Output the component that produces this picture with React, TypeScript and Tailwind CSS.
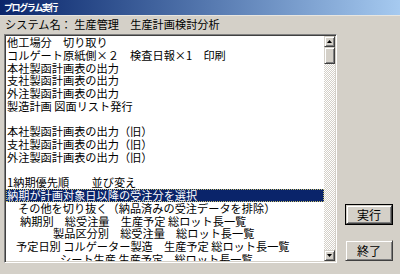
import React from "react";

const items: { text: string; indent?: number; selected?: boolean }[] = [
  { text: "他工場分　切り取り" },
  { text: "コルゲート原紙側×２　検査日報×1　印刷" },
  { text: "本社製函計画表の出力" },
  { text: "支社製函計画表の出力" },
  { text: "外注製函計画表の出力" },
  { text: "製造計画 図面リスト発行" },
  { text: "" },
  { text: "本社製函計画表の出力（旧）" },
  { text: "支社製函計画表の出力（旧）" },
  { text: "外注製函計画表の出力（旧）" },
  { text: "" },
  { text: "1納期優先順　　並び変え" },
  { text: "納期が計画対象日以降の受注分を選択", selected: true },
  { text: "その他を切り抜く（納品済みの受注データを排除）", indent: 11 },
  { text: "納期別　総受注量　生産予定 総ロット長一覧", indent: 13 },
  { text: "製品区分別　総受注量　総ロット長一覧", indent: 46 },
  { text: "予定日別 コルゲーター製造　生産予定 総ロット長一覧", indent: 9 },
  { text: "シート生産 生産予定　総ロット長一覧", indent: 53 },
];

const raised =
  "border border-t-[#d4d0c8] border-l-[#d4d0c8] border-r-[#404040] border-b-[#404040] shadow-[inset_1px_1px_0_#ffffff,inset_-1px_-1px_0_#808080] bg-[#d4d0c8]";

function Arrow({ down }: { down?: boolean }) {
  return (
    <svg width="5" height="3" viewBox="0 0 5 3">
      <path d={down ? "M0 0H5L2.5 3Z" : "M2.5 0L5 3H0Z"} fill="#000" />
    </svg>
  );
}

export default function App() {
  return (
    <div className="w-[400px] h-[274px] bg-[#d4d0c8] overflow-hidden font-['Noto_Sans_CJK_JP',sans-serif] text-black">
      {/* Title bar */}
      <div className="h-[15px] bg-gradient-to-r from-[#0a246a] to-[#a6caf0] flex items-center pl-[4px]">
        <span className="text-white font-bold text-[9px] tracking-[-1.4px] leading-none">プログラム実行</span>
      </div>
      <div className="h-px bg-[#e8e6e0]" />

      {/* System name */}
      <div className="h-[18px] flex items-center pl-[5px] text-[11.2px] leading-none whitespace-pre">
        システム名： 生産管理　生産計画検討分析
      </div>

      <div className="flex pl-[4px]">
        {/* List box */}
        <div className="w-[333px] h-[229px] flex border border-t-[#808080] border-l-[#808080] border-r-white border-b-white shadow-[inset_1px_1px_0_#404040,inset_-1px_-1px_0_#d4d0c8] p-px">
          <div className="flex-1 bg-white overflow-hidden">
            {items.map((it, i) => (
              <div
                key={i}
                className={`h-[12.75px] leading-[12.75px] text-[11.2px] whitespace-pre ${
                  it.selected ? "bg-[#0a246a] text-white outline outline-1 outline-dotted outline-offset-[-1px] outline-[#c8c070]" : ""
                }`}
                style={{ paddingLeft: 1 + (it.indent ?? 0) }}
              >
                {it.text}
              </div>
            ))}
          </div>
          {/* Scrollbar */}
          <div className="w-[11px] flex flex-col bg-[repeating-conic-gradient(#d4d0c8_0_25%,#ffffff_0_50%)] bg-[length:2px_2px]">
            <div className={`h-[11px] flex items-center justify-center ${raised}`}>
              <Arrow />
            </div>
            <div className={`h-[17px] ${raised}`} />
            <div className="flex-1" />
            <div className={`h-[11px] flex items-center justify-center ${raised}`}>
              <Arrow down />
            </div>
          </div>
        </div>

        {/* Buttons */}
        <div className="flex flex-col ml-[8px] pt-[170px] gap-[15px]">
          <button className="w-[48px] h-[21px] border border-black p-0 bg-[#d4d0c8]">
            <div className={`w-full h-full flex items-center justify-center text-[12px] leading-none ${raised}`}>実行</div>
          </button>
          <button className={`w-[48px] h-[21px] flex items-center justify-center text-[12px] leading-none ${raised}`}>
            終了
          </button>
        </div>
      </div>
    </div>
  );
}
